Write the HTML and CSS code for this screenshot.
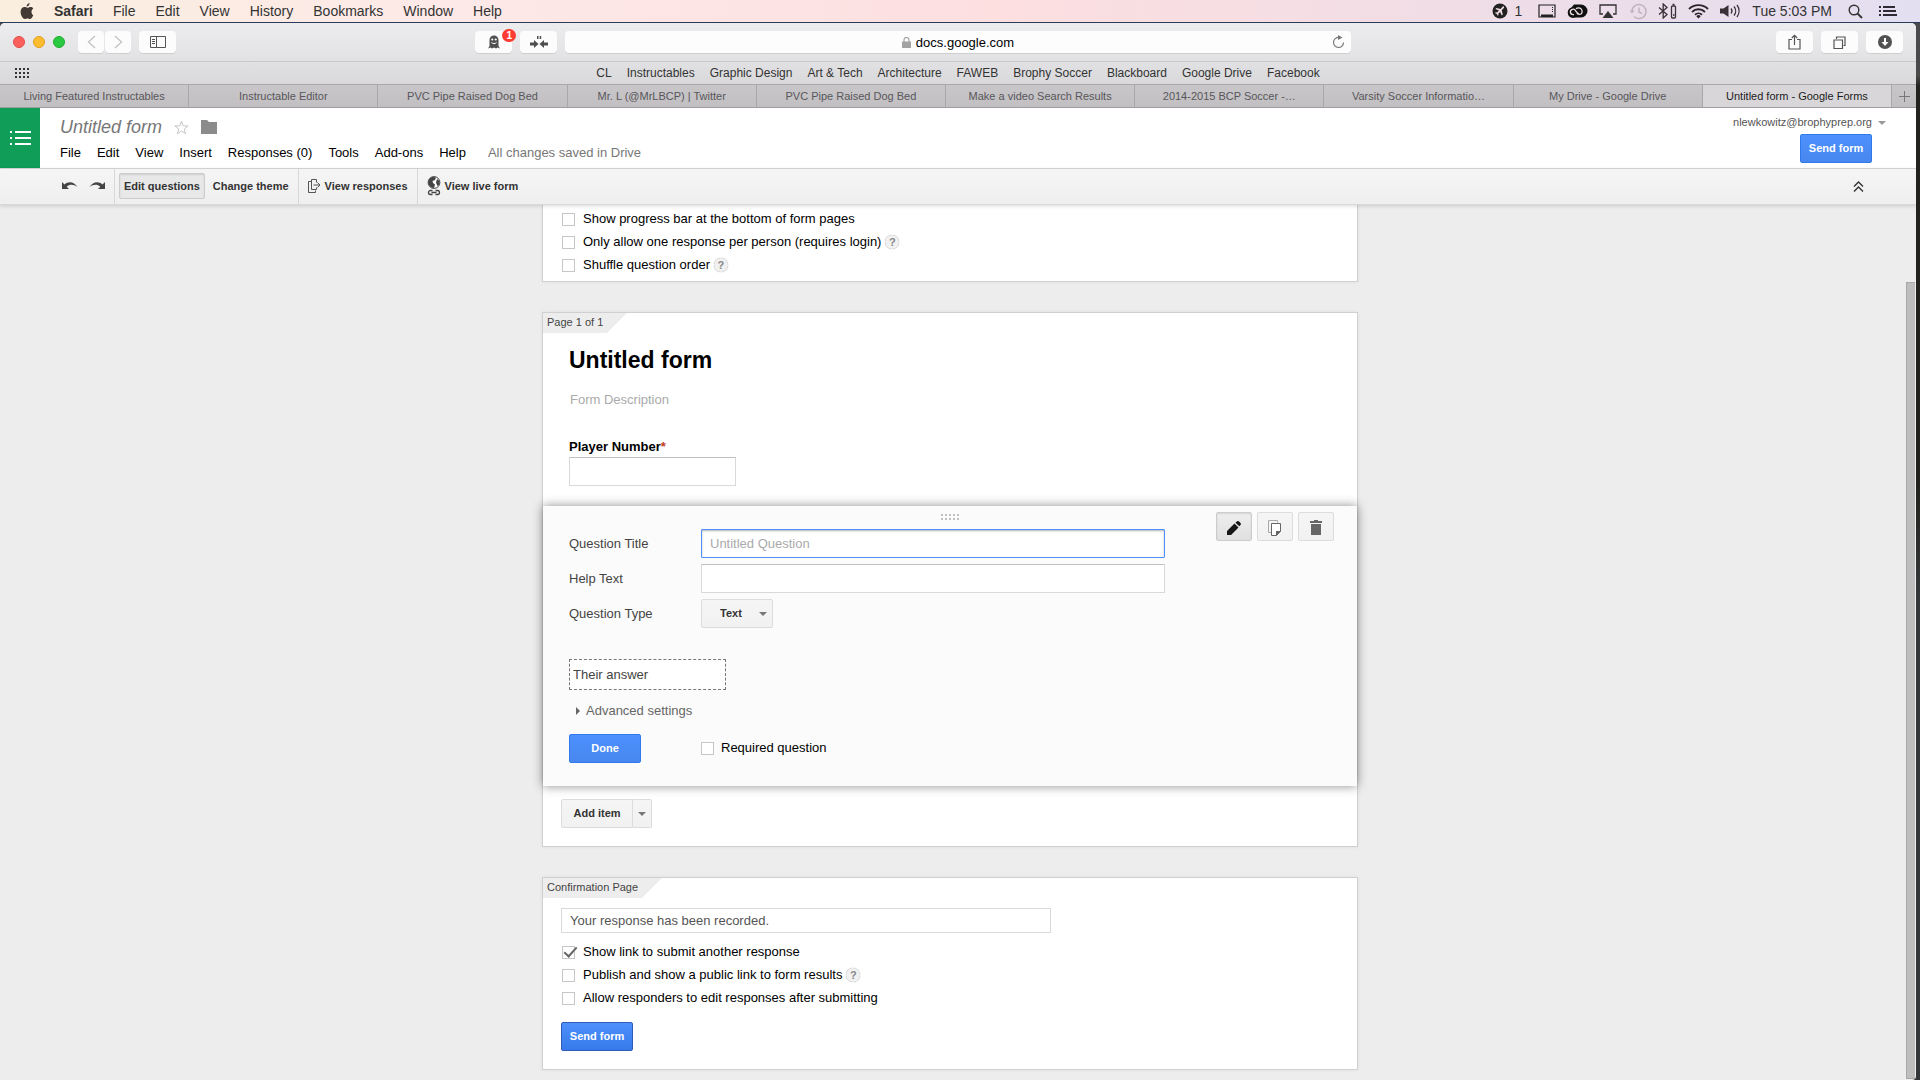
FILE: index.html
```html
<!DOCTYPE html>
<html lang="en">

<head>
    <meta charset="UTF-8">
    <meta name="viewport" content="width=device-width, initial-scale=1.0">
    <title>Untitled form - Google Forms</title>
    <link rel="stylesheet" href="styles.css">
</head>

<body>
    <header class="menubar">
        <nav class="menubar-left">
            <svg class="apple" width="14" height="17" viewBox="0 0 14 17"><path d="M9.6 0c.1 1.700-1.300 3.500-3 3.500C6.400 1.800 8 .2 9.600 0zM13.300 12.200c-.7 1.800-2 3.800-3.300 3.800-1 0-1.400-.6-2.600-.6s-1.600.6-2.500.6C3 16 .6 12.400.6 9c0-3.200 2-4.900 3.900-4.900 1.200 0 2 .7 2.900.7s1.700-.8 3.200-.8c1 0 2 .5 2.700 1.400-2.600 1.600-2.100 5.300 0 6.800z"/></svg>
            <b>Safari</b>
            <span>File</span>
            <span>Edit</span>
            <span>View</span>
            <span>History</span>
            <span>Bookmarks</span>
            <span>Window</span>
            <span>Help</span>
        </nav>
        <div class="menubar-right">
            <svg width="16" height="16" viewBox="0 0 16 16"><circle cx="8" cy="8" r="7.500" fill="#222"/><path d="M11.800 3.500c.6.600.3 1.400-.4 2.100L9.700 7.300l1.100 4.200-1 .9L8.100 9 6.300 10.700l.2 1.400-.7.700-1-1.900-1.800-1 .7-.7 1.400.2L6.900 7.600 3.500 5.900l.9-1 4.200 1.100 1.500-1.700c.6-.8 1.300-1.200 1.700-.8z" fill="#f2dfe5"/></svg>
            <span class="count">1</span>
            <svg class="gap-wide" width="18" height="16" viewBox="0 0 18 16"><path d="M1 2h16v12H1z" fill="none" stroke="#222" stroke-width="1.200"/><path d="M3 11.500h12V14H3z" fill="#222"/><path d="M14.500 4v6" stroke="#222" stroke-dasharray="1 1"/></svg>
            <svg width="21" height="16" viewBox="0 0 21 16"><path d="M7 1.500h7a6.500 6.500 0 0 1 0 13H6a5 5 0 0 1-2-9.500" fill="#111"/><circle cx="6" cy="9.500" r="5.300" fill="#111"/><path d="M12 11.500 8.600 8A2.700 2.700 0 1 0 6 11.600h1M9 5.800a3.600 3.600 0 1 1 5 5.200c-1.600.8-3.300 0-4.200-1" fill="none" stroke="#eedfe6" stroke-width="1.300"/></svg>
            <svg width="18" height="16" viewBox="0 0 18 16"><path d="M4 11H1V2h16v9h-3" fill="none" stroke="#333" stroke-width="1.300"/><path d="M9 8l5.500 7h-11z" fill="#333"/></svg>
            <svg width="19" height="17" viewBox="0 0 19 17" fill="none" stroke="#c2b3bc" stroke-width="1.500"><path d="M4 8.500A7 7 0 1 1 6 13.400"/><path d="M11 4.500V9l3 1.500"/><path d="M1.500 7.500h5L4 10.500z" fill="#c2b3bc" stroke="none"/></svg>
            <svg width="19" height="16" viewBox="0 0 19 16" fill="none" stroke="#3a3037" stroke-width="1.300"><path d="M1 4.500l8 7L5.200 15V1L9 4.500l-8 7"/><rect x="13.500" y="3" width="4" height="12" rx="1"/><path d="M14.500 1.500h2M15 12h1.500" stroke-width="1.600"/></svg>
            <svg width="21" height="16" viewBox="0 0 21 16" fill="none" stroke="#2c252b" stroke-width="1.900"><path d="M1 6a13.500 13.500 0 0 1 19 0M4 9a9.200 9.200 0 0 1 13 0M7 11.800a5 5 0 0 1 7 0"/><path d="M10.500 15.500 8.300 13.200a3 3 0 0 1 4.400 0z" fill="#2c252b" stroke="none"/></svg>
            <svg width="21" height="16" viewBox="0 0 21 16" fill="none" stroke="#3a3037" stroke-width="1.300"><path d="M0 5.500h3.500L8.500 2v12L3.500 10.500H0z" fill="#3a3037" stroke="none"/><path d="M11 5.500a4 4 0 0 1 0 5M14 3.500a7 7 0 0 1 0 9M17 2a10 10 0 0 1 0 12"/></svg>
            <span>Tue 5:03 PM</span>
            <svg class="gap-wide" width="15" height="15" viewBox="0 0 15 15" fill="none" stroke="#333" stroke-width="1.400"><circle cx="6" cy="6" r="4.800"/><path d="M9.500 9.500 14 14" stroke-width="1.800"/></svg>
            <svg class="gap-wide" width="18" height="14" viewBox="0 0 18 14" fill="#2f2a33"><path d="M0 2h2v2H0zM4 2h12v2H4zM0 6h2v2H0zM4 6h13v2H4zM0 10h2v2H0zM4 10h14v2H4z"/></svg>
        </div>
    </header>

    <div class="window">
        <div class="browser-bar">
            <div class="bar-left">
                <div class="lights">
                    <i class="light red"></i>
                    <i class="light yellow"></i>
                    <i class="light green"></i>
                </div>
                <div class="history">
                    <button class="bar-btn narrow" aria-label="Back"><svg width="9" height="14" viewBox="0 0 9 14" fill="none" stroke="#c4c4c4" stroke-width="1.400"><path d="M8 1 1.500 7 8 13"/></svg></button>
                    <button class="bar-btn narrow" aria-label="Forward"><svg width="9" height="14" viewBox="0 0 9 14" fill="none" stroke="#c4c4c4" stroke-width="1.400"><path d="M1 1l6.500 6L1 13"/></svg></button>
                </div>
                <button class="bar-btn" aria-label="Sidebar"><svg width="16" height="12" viewBox="0 0 16 12" fill="none" stroke="#555"><path d="M.5.500h15v11H.5zM6.500.500v11M2 3.500h3M2 5.500h3M2 7.500h3"/></svg></button>
                <div class="extensions">
                    <button class="bar-btn" aria-label="Ghostery">
                        <svg width="14" height="14" viewBox="0 0 14 14"><path d="M2.500 11V5a4.500 4.500 0 0 1 9 0v6l1.500 2.500-2.500-1-1.500 1-2-1-2 1-1.500-1-2.500 1z" fill="#4f4f4f"/><circle cx="5.300" cy="4.500" r="1.100" fill="#fff"/><circle cx="8.700" cy="4.500" r="1.100" fill="#fff"/><path d="M4.500 7.500c1.500 1.500 3.500 1.500 5 0" fill="none" stroke="#fff"/></svg>
                        <span class="badge">1</span>
                    </button>
                    <button class="bar-btn" aria-label="Extension"><svg width="18" height="12" viewBox="0 0 18 12" fill="#4f4f4f"><path d="M0 6.500h4V4l4.500 4L4 12V9.500H0zM18 6.500h-4V4L9.500 8l4.500 4V9.500h4zM7 0h1.500v3H7zM9.700 0h1.500v3H9.700z"/></svg></button>
                </div>
            </div>
            <div class="address">
                <svg width="9" height="11" viewBox="0 0 9 11"><path d="M0 4.500h9V11H0z" fill="#a3a3a3"/><path d="M2 5V3a2.500 2.500 0 0 1 5 0v2" fill="none" stroke="#a3a3a3" stroke-width="1.200"/></svg>
                <span>docs.google.com</span>
                <button class="reload" aria-label="Reload"><svg width="13" height="14" viewBox="0 0 13 14"><path d="M7 2.500a5 5 0 1 0 4.500 5" fill="none" stroke="#777" stroke-width="1.200"/><path d="M6 0l4.500 2.500L6 5z" fill="#777"/></svg></button>
            </div>
            <div class="bar-right">
                <button class="bar-btn" aria-label="Share"><svg width="13" height="16" viewBox="0 0 13 16" fill="none" stroke="#555" stroke-width="1.200"><path d="M4 5.500H1v9.500h11V5.500H9M6.500 11V1.500M3.800 4l2.700-2.700L9.200 4"/></svg></button>
                <button class="bar-btn" aria-label="Tabs"><svg width="13" height="13" viewBox="0 0 13 13" fill="none" stroke="#555" stroke-width="1.200"><path d="M1 4h8.500v8.500H1zM3.500 3V1H12v8.500h-1.500"/></svg></button>
                <button class="bar-btn" aria-label="Downloads"><svg width="14" height="14" viewBox="0 0 14 14"><circle cx="7" cy="7" r="7" fill="#515151"/><path d="M6 3h2v4h2.500L7 11 3.500 7H6z" fill="#fff"/></svg></button>
            </div>
        </div>

        <nav class="bookmarks">
            <svg class="grid-icon" width="15" height="11" viewBox="0 0 15 11"><path d="M0 1h15M0 5h15M0 9h15" stroke="#333" stroke-width="2" stroke-dasharray="2 2"/></svg>
            <a href="#">CL</a>
            <a href="#">Instructables</a>
            <a href="#">Graphic Design</a>
            <a href="#">Art &amp; Tech</a>
            <a href="#">Architecture</a>
            <a href="#">FAWEB</a>
            <a href="#">Brophy Soccer</a>
            <a href="#">Blackboard</a>
            <a href="#">Google Drive</a>
            <a href="#">Facebook</a>
        </nav>

        <div class="tabs">
            <a href="#" class="tab">Living Featured Instructables</a>
            <a href="#" class="tab">Instructable Editor</a>
            <a href="#" class="tab">PVC Pipe Raised Dog Bed</a>
            <a href="#" class="tab">Mr. L (@MrLBCP) | Twitter</a>
            <a href="#" class="tab">PVC Pipe Raised Dog Bed</a>
            <a href="#" class="tab">Make a video Search Results</a>
            <a href="#" class="tab">2014-2015 BCP Soccer -…</a>
            <a href="#" class="tab">Varsity Soccer Informatio…</a>
            <a href="#" class="tab">My Drive - Google Drive</a>
            <a href="#" class="tab active">Untitled form - Google Forms</a>
            <button class="new-tab" aria-label="New tab"><svg width="11" height="11" viewBox="0 0 11 11"><path d="M5.500 0v11M0 5.500h11" stroke="#777"/></svg></button>
        </div>

        <div class="app-header">
            <a href="#" class="logo" aria-label="Forms home"><svg width="22" height="14" viewBox="0 0 22 14" fill="#fff"><path d="M0 0h2v2H0zM5 0h16v2H5zM0 6h2v2H0zM5 6h16v2H5zM0 12h2v2H0zM5 12h16v2H5z"/></svg></a>
            <div class="doc">
                <div class="doc-title">
                    <span class="name">Untitled form</span>
                    <svg width="15" height="15" viewBox="0 0 15 15"><path d="M7.500 1.200 9.200 5.800l4.900.2-3.900 3 1.400 4.700-4.100-2.700-4.100 2.700L4.800 9 .9 6l4.900-.2z" fill="#fff" stroke="#c4c4c4"/></svg>
                    <svg width="16" height="14" viewBox="0 0 16 14"><path d="M0 0h6l2 2h8v12H0z" fill="#8b8b8b"/></svg>
                </div>
                <nav class="doc-menu">
                    <span>File</span>
                    <span>Edit</span>
                    <span>View</span>
                    <span>Insert</span>
                    <span>Responses (0)</span>
                    <span>Tools</span>
                    <span>Add-ons</span>
                    <span>Help</span>
                    <span class="saved">All changes saved in Drive</span>
                </nav>
            </div>
            <div class="account">
                <a href="#" class="email">nlewkowitz@brophyprep.org <i class="caret light-caret"></i></a>
                <button class="btn primary">Send form</button>
            </div>
        </div>

        <div class="toolbar">
            <div class="tool-group undo-group">
                <button class="icon-btn" aria-label="Undo"><svg width="16" height="9" viewBox="0 0 16 9"><path d="M0 1v7h7L4.700 5.700C8 2.800 12 3.500 15.500 6 12 0 6 0 2.500 3.500z" fill="#444"/></svg></button>
                <button class="icon-btn" aria-label="Redo"><svg width="16" height="9" viewBox="0 0 16 9"><path d="M16 1v7H9l2.300-2.300C8 2.800 4 3.500.5 6 4 0 10 0 13.500 3.500z" fill="#444"/></svg></button>
            </div>
            <div class="tool-group">
                <button class="tool-btn pressed">Edit questions</button>
                <button class="tool-btn">Change theme</button>
            </div>
            <div class="tool-group">
                <button class="tool-btn"><svg width="13" height="14" viewBox="0 0 13 14" fill="none" stroke="#555"><path d="M3.500 2.500h-3v11h7v-2M8.500 3.500v-3h-5v10h5v-2M5.500 6h6M9.500 3.500 12 6 9.500 8.500"/></svg>View responses</button>
            </div>
            <div class="tool-group last">
                <button class="tool-btn"><svg width="14" height="20" viewBox="0 0 14 20"><circle cx="7" cy="6.500" r="5.900" fill="#fff" stroke="#444"/><path d="M2 3.500C4 .5 7.500.8 9 1.500L8 4 5.500 5l.5 2 2 1.500-1 3.500C4 12 1.200 9 1.200 6zM10 3l2.500 2v3.500l-2 1.500L9 6.500z" fill="#444"/><path d="M5.500 14.500h-2a2 2 0 0 0 0 4h2M8.500 14.500h2a2 2 0 0 1 0 4h-2M4.500 16.500h5" fill="none" stroke="#444" stroke-width="1.300"/></svg>View live form</button>
            </div>
            <button class="icon-btn collapse" aria-label="Hide menus"><svg width="11" height="11" viewBox="0 0 11 11" fill="none" stroke="#333" stroke-width="1.400"><path d="M1 5.500 5.500 1 10 5.500M1 10.500 5.500 6l4.500 4.500"/></svg></button>
        </div>

        <div class="page">
            <main class="content">
                <section class="card settings">
                    <div class="check-row"><label><input type="checkbox">Show progress bar at the bottom of form pages</label></div>
                    <div class="check-row"><label><input type="checkbox">Only allow one response per person (requires login)</label><span class="help">?</span></div>
                    <div class="check-row"><label><input type="checkbox">Shuffle question order</label><span class="help">?</span></div>
                </section>

                <section class="card">
                    <div class="card-label">Page 1 of 1</div>
                    <div class="form-head">
                        <h1>Untitled form</h1>
                        <input type="text" class="description" placeholder="Form Description" aria-label="Form description">
                        <label class="question-label" for="player">Player Number<em>*</em></label>
                        <input type="text" id="player" class="text-box player">
                    </div>

                    <div class="editor">
                        <svg class="handle" width="18" height="6" viewBox="0 0 18 6"><path d="M0 1h18M0 5h18" stroke="#c0c0c0" stroke-width="2" stroke-dasharray="2 2"/></svg>
                        <div class="editor-top">
                            <div class="fields">
                                <label for="q-title">Question Title</label>
                                <input type="text" id="q-title" class="text-box focused" placeholder="Untitled Question">
                                <label for="q-help">Help Text</label>
                                <input type="text" id="q-help" class="text-box">
                                <label for="q-type">Question Type</label>
                                <div class="select-wrap">
                                    <select id="q-type">
                                        <option>Text</option>
                                    </select>
                                    <i class="caret"></i>
                                </div>
                            </div>
                            <div class="tools">
                                <button class="btn pressed" aria-label="Edit"><svg width="14" height="14" viewBox="0 0 14 14" fill="#161616"><path d="M0 10 7.500 2.500l4 4L4 14H0zM8.500 1.700l1-1c1-1 2-.8 2.800 0l1 1c.8.800.8 1.800 0 2.600l-1 1z"/></svg></button>
                                <button class="btn" aria-label="Duplicate"><svg width="14" height="16" viewBox="0 0 14 16" fill="none"><path d="M3.500 12.500h-3V.500h9v2" stroke="#aaa"/><path d="M3.500 3.500h9v8l-4 4h-5z" fill="#fff" stroke="#666"/><path d="M8 11h5l-5 5z" fill="#666"/></svg></button>
                                <button class="btn" aria-label="Delete"><svg width="12" height="15" viewBox="0 0 12 15" fill="#666"><path d="M4 0h4v1h4v2H0V1h4zM1 4h10v11H1z"/></svg></button>
                            </div>
                        </div>
                        <input type="text" class="answer" value="Their answer" readonly aria-label="Answer preview">
                        <a href="#" class="advanced"><i class="arrow"></i>Advanced settings</a>
                        <div class="editor-bottom">
                            <button class="btn primary">Done</button>
                            <label><input type="checkbox">Required question</label>
                        </div>
                    </div>

                    <div class="add-item">
                        <button class="btn">Add item</button><button class="btn drop" aria-label="Item types"><i class="caret"></i></button>
                    </div>
                </section>

                <section class="card">
                    <div class="card-label wide">Confirmation Page</div>
                    <div class="confirm">
                        <input type="text" class="message" value="Your response has been recorded." aria-label="Confirmation message">
                        <div class="check-row"><label><input type="checkbox" checked>Show link to submit another response</label></div>
                        <div class="check-row"><label><input type="checkbox">Publish and show a public link to form results</label><span class="help">?</span></div>
                        <div class="check-row"><label><input type="checkbox">Allow responders to edit responses after submitting</label></div>
                        <button class="btn primary send">Send form</button>
                    </div>
                </section>
            </main>
            <div class="scrollbar"></div>
        </div>
    </div>
</body>

</html>
```
FILE: styles.css
```css
* {
    box-sizing: border-box;
}

body {
    display: flex;
    flex-direction: column;
    height: 100vh;
    margin: 0;
    overflow: hidden;
    background: linear-gradient(#4a4a4a 7%, #23221e 8%, #23221e 45%, #343739 55%);
    font-family: "Liberation Sans", Arial, sans-serif;
    font-size: 13px;
    color: #000;
}

svg {
    display: block;
    flex: none;
}

a {
    color: inherit;
    text-decoration: none;
}

button,
input,
select {
    margin: 0;
    font-family: inherit;
}

button {
    padding: 0;
    border: none;
    background: none;
    cursor: pointer;
}

/* mac menu bar */

.menubar {
    display: flex;
    justify-content: space-between;
    flex: none;
    height: 23px;
    padding: 0 23px 0 20px;
    border-bottom: 1px solid #2a3c5c;
    background: linear-gradient(90deg, #faeedf, #fdeae8 22%, #fddfe0 52%, #f0dde6 76%, #e3dff1);
    font-size: 14px;
    line-height: 22px;
    color: #333;
}

.menubar-left,
.menubar-right {
    display: flex;
    align-items: center;
}

.menubar-left {
    gap: 20px;
}

.apple {
    fill: #443a35;
}

.menubar-right {
    gap: 11px;
}

.menubar-right .count {
    margin-left: -4px;
}

.menubar-right .gap-wide {
    margin-left: 5px;
}

/* browser window */

.window {
    display: flex;
    flex-direction: column;
    flex: 1;
    min-height: 0;
    margin-right: 4px;
    overflow: hidden;
    border-radius: 5px 5px 4px 0;
    background: #ededed;
}

.browser-bar {
    display: grid;
    grid-template-columns: 1fr 41% 1fr;
    column-gap: 8px;
    align-items: center;
    flex: none;
    height: 39px;
    border-bottom: 1px solid #c9c9cb;
    background: linear-gradient(#ececee, #e2e2e4);
}

.bar-left,
.bar-right,
.lights,
.history,
.extensions {
    display: flex;
    align-items: center;
}

.bar-left {
    gap: 8px;
    padding-left: 13px;
}

.lights {
    gap: 8px;
    margin-right: 5px;
}

.light {
    width: 12px;
    height: 12px;
    border-radius: 50%;
}

.red {
    background: #fc605c;
    border: 1px solid #e34b48;
}

.yellow {
    background: #fdbc2f;
    border: 1px solid #dfa023;
}

.green {
    background: #2ac940;
    border: 1px solid #1fad2f;
}

.history {
    gap: 1px;
}

.bar-btn {
    position: relative;
    display: flex;
    align-items: center;
    justify-content: center;
    width: 37px;
    height: 22px;
    border-radius: 4px;
    background: #fcfcfc;
    box-shadow: 0 1px 0 #cfcfd1;
}

.bar-btn.narrow {
    width: 26px;
}

.extensions {
    gap: 8px;
    margin-left: auto;
}

.badge {
    position: absolute;
    top: -2px;
    right: -4px;
    width: 14px;
    height: 13px;
    border-radius: 7px;
    background: #fc3b33;
    color: #fff;
    font-size: 10px;
    font-weight: bold;
    line-height: 13px;
}

.address {
    display: flex;
    align-items: center;
    justify-content: center;
    gap: 5px;
    position: relative;
    height: 22px;
    border-radius: 4px;
    background: #fdfdfd;
    box-shadow: 0 1px 0 #cfcfd1;
}

.reload {
    position: absolute;
    right: 6px;
    top: 4px;
}

.bar-right {
    gap: 8px;
    justify-content: flex-end;
    padding-right: 13px;
}

.bookmarks {
    position: relative;
    display: flex;
    align-items: center;
    justify-content: center;
    gap: 15px;
    flex: none;
    height: 22px;
    background: linear-gradient(#e1e1e3, #d9d9db);
    font-size: 12px;
    color: #333;
}

.grid-icon {
    position: absolute;
    left: 15px;
    top: 6px;
}

.tabs {
    display: flex;
    flex: none;
    height: 24px;
    border-top: 1px solid #aaa8ab;
    border-bottom: 1px solid #9f9da0;
    background: linear-gradient(#c8c6c9, #c1bfc2);
}

.tab {
    flex: 1;
    min-width: 0;
    overflow: hidden;
    border-right: 1px solid #a9a7aa;
    color: #58565a;
    font-size: 11px;
    line-height: 22px;
    text-align: center;
    white-space: nowrap;
}

.tab.active {
    background: #d8d6d9;
    color: #1c1c1c;
}

.new-tab {
    display: flex;
    align-items: center;
    justify-content: center;
    width: 24px;
}

/* forms header */

.app-header {
    display: flex;
    flex: none;
    height: 61px;
    border-bottom: 1px solid #d8d8d8;
    background: #fff;
}

.logo {
    display: flex;
    align-items: center;
    width: 40px;
    height: 60px;
    padding-left: 10px;
    background: #0f9d58;
}

.doc {
    padding: 7px 0 0 20px;
}

.doc-title {
    display: flex;
    align-items: center;
    gap: 12px;
    height: 24px;
    color: #777;
}

.doc-title .name {
    font-size: 18px;
    font-style: italic;
    line-height: 24px;
}

.doc-menu {
    display: flex;
    gap: 16px;
    margin-top: 4px;
    line-height: 20px;
}

.doc-menu .saved {
    margin-left: 6px;
    color: #777;
}

.account {
    display: flex;
    flex-direction: column;
    align-items: flex-end;
    gap: 4px;
    margin-left: auto;
    padding: 6px 44px 0 0;
}

.email {
    position: relative;
    color: #555;
    font-size: 11px;
    line-height: 16px;
}

.caret {
    display: inline-block;
    border: 4px solid transparent;
    border-top-color: #777;
    border-bottom: none;
}

.light-caret {
    position: absolute;
    right: -14px;
    top: 7px;
    border-top-color: #999;
}

/* buttons */

.btn {
    display: flex;
    align-items: center;
    justify-content: center;
    height: 29px;
    padding-bottom: 2px;
    border: 1px solid #dcdcdc;
    border-radius: 2px;
    background: linear-gradient(#f5f5f5, #f1f1f1);
    color: #333;
    font-size: 11px;
    font-weight: bold;
}

.btn.primary {
    width: 72px;
    border-color: #3079ed;
    background: linear-gradient(#4d90fe, #4787ed);
    color: #fff;
}

.btn.pressed {
    border-color: #ccc;
    background: linear-gradient(#eee, #e0e0e0);
    box-shadow: inset 0 1px 2px rgba(0, 0, 0, 0.1);
}

.btn.send {
    margin-top: 13px;
    border-color: #2f5bb7;
    background: linear-gradient(#4d90fe, #357ae8);
}

/* toolbar */

.toolbar {
    position: relative;
    display: flex;
    flex: none;
    height: 36px;
    border-bottom: 1px solid #d8d8d8;
    background: linear-gradient(#f5f5f5, #efefef);
    box-shadow: 0 1px 4px rgba(0, 0, 0, 0.15);
}

.tool-group {
    display: flex;
    align-items: center;
    padding: 0 4px 2px;
    border-right: 1px solid #d8d8d8;
}

.tool-group.last {
    border-right: none;
}

.undo-group {
    gap: 11px;
    padding: 0 9px 2px 62px;
}

.tool-btn {
    display: flex;
    align-items: center;
    gap: 4px;
    height: 26px;
    padding: 0 4px;
    border: 1px solid transparent;
    border-radius: 2px;
    color: #333;
    font-size: 11px;
    font-weight: bold;
}

.tool-btn.pressed {
    margin-right: 3px;
    border-color: #ccc;
    background: #e8e8e8;
    box-shadow: inset 0 1px 2px rgba(0, 0, 0, 0.1);
}

.collapse {
    margin: 0 52px 0 auto;
}

/* page */

.page {
    display: flex;
    flex: 1;
    min-height: 0;
    overflow: hidden;
}

.content {
    display: flex;
    flex-direction: column;
    align-items: center;
    gap: 30px;
    flex: 1;
}

.scrollbar {
    width: 9px;
    margin: 77px 1px 1px 6px;
    border: 1px solid #a8a8a8;
    border-right: none;
    background: #bebebe;
}

.card {
    width: 100%;
    max-width: 816px;
    border: 1px solid #d0d0d0;
    background: #fff;
    box-shadow: 0 0 4px rgba(0, 0, 0, 0.06);
}

.settings {
    padding: 2px 18px 5px;
    border-top: none;
}

.check-row {
    display: flex;
    align-items: center;
    gap: 4px;
    height: 23px;
}

.check-row label,
.editor-bottom label {
    display: flex;
    align-items: flex-end;
    gap: 8px;
    line-height: 15px;
}

.check-row label {
    padding-left: 1px;
}

.editor-bottom label {
    gap: 7px;
    padding-bottom: 2px;
}

input[type="checkbox"] {
    position: relative;
    appearance: none;
    width: 13px;
    height: 13px;
    border: 1px solid #c6c6c6;
    background: #fff;
}

input[type="checkbox"]:checked::after {
    content: "";
    position: absolute;
    left: 4px;
    top: -3px;
    width: 5px;
    height: 11px;
    border: solid #666;
    border-width: 0 2px 2px 0;
    transform: rotate(42deg);
}

.help {
    width: 14px;
    height: 14px;
    border-radius: 50%;
    background: #f1f1f1;
    box-shadow: 0 0 1px #888;
    color: #888;
    font-size: 11px;
    font-weight: bold;
    line-height: 14px;
    text-align: center;
}

.card-label {
    width: 84px;
    height: 20px;
    padding-left: 4px;
    background: #ededed;
    clip-path: polygon(0 0, 100% 0, calc(100% - 20px) 100%, 0 100%);
    color: #444;
    font-size: 11px;
    line-height: 19px;
}

.card-label.wide {
    width: 119px;
}

.form-head {
    display: flex;
    flex-direction: column;
    padding: 12px 26px 20px;
}

h1 {
    margin: 0;
    font-size: 23px;
    line-height: 30px;
}

.description {
    width: 400px;
    height: 20px;
    margin-top: 14px;
    padding: 0 1px;
    border: none;
    font-size: 13px;
}

::placeholder {
    color: #aaa;
    opacity: 1;
}

.question-label {
    margin: 29px 0 1px;
    font-weight: bold;
    line-height: 18px;
}

.question-label em {
    color: #c43b1d;
    font-style: normal;
}

.text-box {
    height: 29px;
    padding: 0 8px;
    border: 1px solid #d9d9d9;
    border-top-color: #c0c0c0;
    background: #fff;
    font-size: 13px;
}

.text-box.focused {
    border-color: #4d90fe;
    border-radius: 1px;
    box-shadow: inset 0 1px 2px rgba(0, 0, 0, 0.3);
}

.player {
    width: 167px;
}

/* question editor */

.editor {
    position: relative;
    padding: 6px 23px 23px 26px;
    background: #fbfbfb;
    box-shadow: 0 0 10px rgba(0, 0, 0, 0.45);
    color: #444;
}

.handle {
    position: absolute;
    top: 8px;
    left: calc(50% - 9px);
}

.editor-top {
    display: flex;
    justify-content: space-between;
}

.fields {
    display: grid;
    grid-template-columns: 132px 464px;
    row-gap: 6px;
    align-items: center;
    margin-top: 17px;
}

.select-wrap {
    position: relative;
    width: 72px;
}

.select-wrap select {
    display: block;
    appearance: none;
    width: 100%;
    height: 29px;
    padding: 0 18px 2px;
    border: 1px solid #dcdcdc;
    border-radius: 2px;
    background: linear-gradient(#f5f5f5, #f1f1f1);
    color: #333;
    font-size: 11px;
    font-weight: bold;
}

.select-wrap .caret {
    position: absolute;
    right: 6px;
    top: 13px;
}

.tools {
    display: flex;
    gap: 5px;
}

.tools .btn {
    width: 36px;
    padding: 2px 0 0;
}

.answer {
    display: block;
    width: 157px;
    height: 31px;
    margin-top: 31px;
    padding: 0 3px;
    border: 1px dashed #777;
    background: #fff;
    color: #444;
    font-size: 13px;
}

.advanced {
    display: flex;
    align-items: center;
    gap: 6px;
    margin: 11px 0 13px;
    padding-left: 7px;
    color: #666;
    line-height: 20px;
}

.arrow {
    border: 4px solid transparent;
    border-left-color: #666;
    border-right: none;
}

.editor-bottom {
    display: grid;
    grid-template-columns: 132px auto;
    align-items: center;
    color: #000;
}

.add-item {
    display: flex;
    padding: 13px 18px 18px;
}

.add-item .btn {
    width: 72px;
    border-radius: 2px 0 0 2px;
}

.add-item .drop {
    width: 19px;
    padding: 0;
    border-left: none;
    border-radius: 0 2px 2px 0;
}

/* confirmation */

.confirm {
    padding: 10px 18px 18px;
}

.message {
    display: block;
    width: 490px;
    height: 25px;
    margin-bottom: 7px;
    padding: 0 8px;
    border: 1px solid #d9d9d9;
    background: #fff;
    color: #555;
    font-size: 13px;
}
```
